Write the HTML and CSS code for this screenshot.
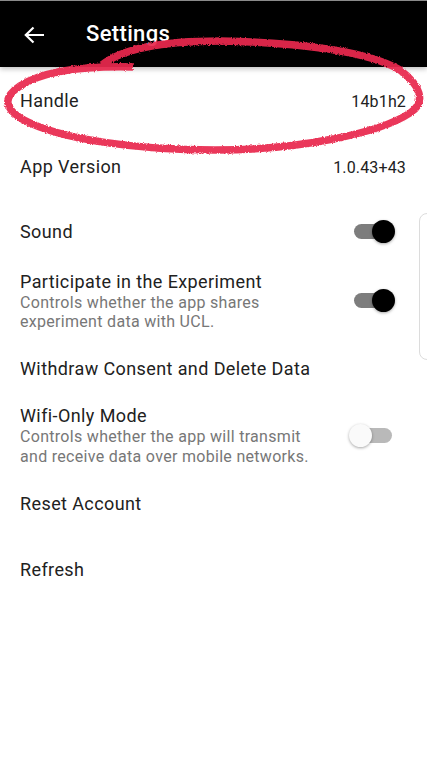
FILE: index.html
```html
<!DOCTYPE html>
<html>
<head>
<meta charset="utf-8">
<link rel="stylesheet" href="styles.css">
</head>
<body>
<div class="screen">
  <header class="appbar">
    <svg class="back" width="24" height="20" viewBox="0 0 24 20"><path d="M22 10H4.5M11.5 2.5L3.8 10l7.7 7.5" fill="none" stroke="#fff" stroke-width="2.2"/></svg>
    <h1 class="title">Settings</h1>
  </header>
  <main class="list">
    <div class="row r-handle"><span class="label">Handle</span><span class="value">14b1h2</span></div>
    <div class="row r-version"><span class="label">App Version</span><span class="value">1.0.43+43</span></div>
    <div class="row r-sound"><span class="label">Sound</span><span class="switch on"><span class="track"></span><span class="thumb"></span></span></div>
    <div class="row r-two">
      <div class="text"><div class="label">Participate in the Experiment</div><div class="sub">Controls whether the app shares<br>experiment data with UCL.</div></div>
      <span class="switch on"><span class="track"></span><span class="thumb"></span></span>
    </div>
    <div class="row r-withdraw"><span class="label">Withdraw Consent and Delete Data</span></div>
    <div class="row r-wifi">
      <div class="text"><div class="label">Wifi-Only Mode</div><div class="sub">Controls whether the app will transmit<br>and receive data over mobile networks.</div></div>
      <span class="switch off"><span class="track"></span><span class="thumb"></span></span>
    </div>
    <div class="row r-reset"><span class="label">Reset Account</span></div>
    <div class="row r-refresh"><span class="label">Refresh</span></div>
  </main>
  <div class="edge-panel"></div>
  <svg class="scribble" width="427" height="757" viewBox="0 0 427 757">
    <defs>
      <filter id="rough" x="-5%" y="-20%" width="110%" height="140%">
        <feTurbulence type="fractalNoise" baseFrequency="0.9" numOctaves="2" seed="3" result="n"/>
        <feDisplacementMap in="SourceGraphic" in2="n" scale="3" xChannelSelector="R" yChannelSelector="G"/>
      </filter>
    </defs>
    <path filter="url(#rough)" d="M133 67 C90 66, 45 70, 20 86 C3 97, 4 108, 22 119 C60 140, 140 150, 215 150 C300 150, 380 133, 410 113 C427 102, 420 85, 400 70 C370 52, 300 42, 220 41 C160 41, 120 50, 102 65" fill="none" stroke="#e8294f" stroke-opacity="0.93" stroke-width="7.5" stroke-linecap="butt" stroke-linejoin="round"/>
  </svg>
</div>
</body>
</html>
```

FILE: styles.css
```css
* { box-sizing: border-box; }
html, body { margin: 0; padding: 0; background: #fff; }
body { font-family: Roboto, "Noto Sans", sans-serif; color: #212121; }
.screen { position: relative; width: 427px; height: 757px; overflow: hidden; background: #fff; }
.appbar {
  height: 67px; background: #000; border-top: 1px solid #8a8a8a;
  display: flex; align-items: center; padding: 0 0 0 22px;
  box-shadow: 0 2px 5px rgba(0,0,0,0.25);
  position: relative; z-index: 1;
}
.back { margin-top: 1px; flex: none; }
.title { margin: 0 0 0 40px; color: #fff; font-size: 22px; font-weight: 500; letter-spacing: 0.35px; line-height: 1; }
.list { display: flex; flex-direction: column; padding-top: 1px; }
.row { display: flex; align-items: center; justify-content: space-between; padding: 0 21px 0 20px; }
.label { font-size: 18px; line-height: 22px; letter-spacing: 0.4px; color: #212121; }
.value { font-size: 16px; letter-spacing: 0.15px; color: #212121; }
.sub { font-size: 16px; line-height: 19.5px; letter-spacing: 0.3px; color: #777; }
.r-handle { height: 66px; }
.r-version { height: 66px; }
.r-sound { height: 64px; }
.r-two { height: 74px; }
.r-withdraw { height: 62px; }
.r-wifi { height: 71px; }
.r-reset { height: 66px; }
.r-refresh { height: 66px; }
.switch { position: relative; width: 46px; height: 24px; margin-right: 11px; flex: none; margin-top: -1px; }
.track { position: absolute; left: 5px; right: 3px; top: 4.5px; height: 15px; border-radius: 8px; }
.thumb { position: absolute; top: 0.5px; width: 23px; height: 23px; border-radius: 50%; box-shadow: 0 1px 3px rgba(0,0,0,0.35); }
.on .track { background: #7d7d7d; }
.on .thumb { right: 0; background: #000; }
.off .track { background: #b9b9b9; }
.off .thumb { left: 0; background: #fafafa; }
.edge-panel { position: absolute; left: 419px; top: 213px; width: 20px; height: 147px; border: 1px solid #dcdcdc; border-radius: 8px; }
.scribble { position: absolute; left: 0; top: 0; pointer-events: none; z-index: 2; }
```
